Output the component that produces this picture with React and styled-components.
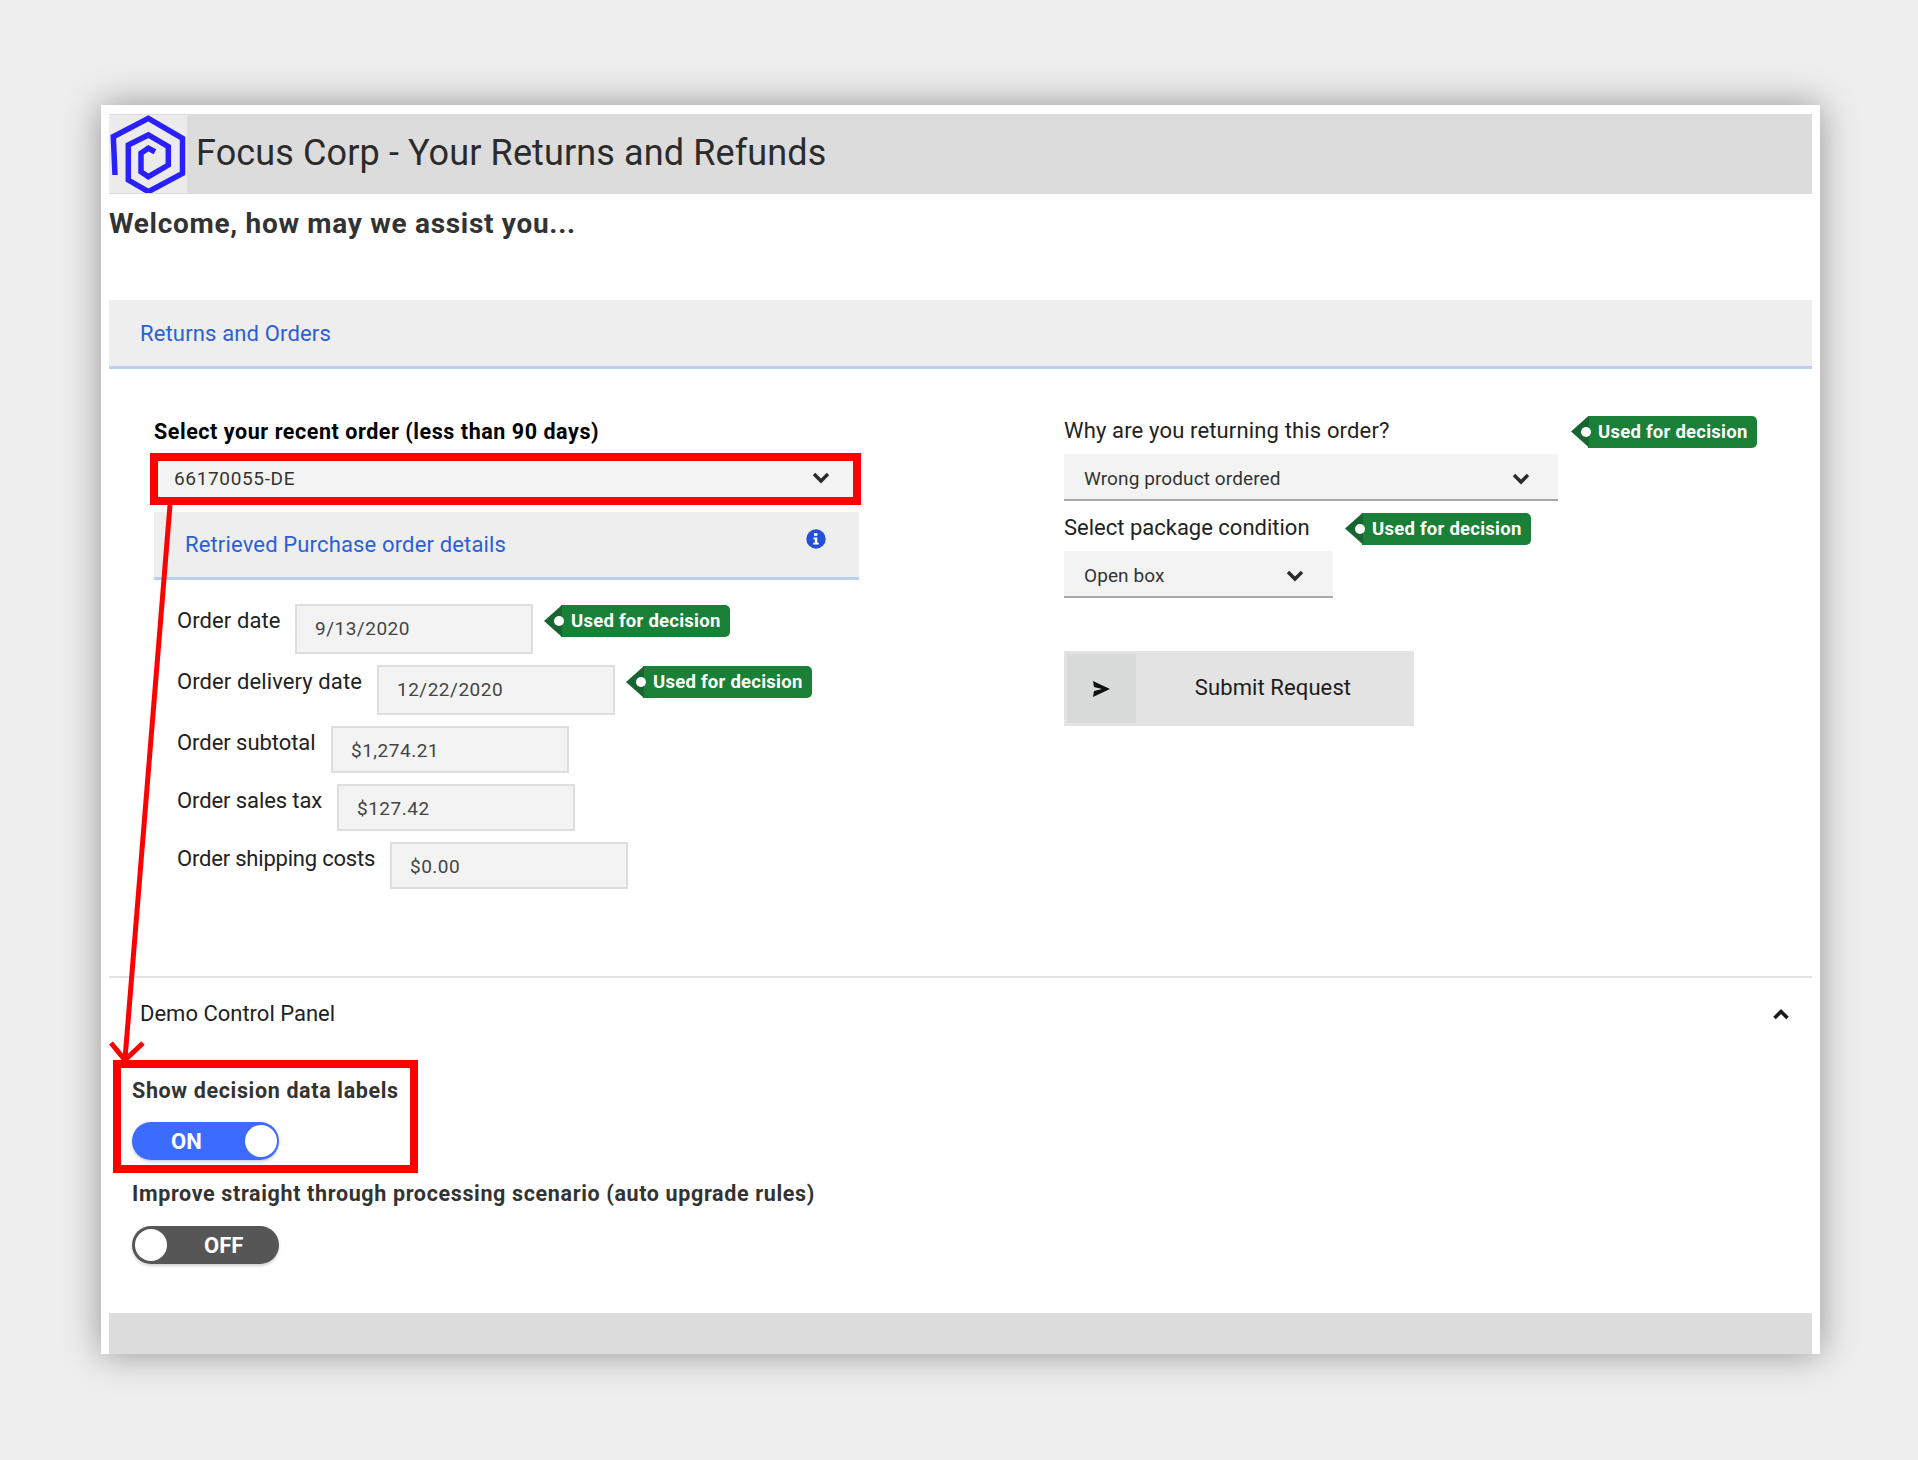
import React from "react";
import styled, { createGlobalStyle } from "styled-components";

const Global = createGlobalStyle`
  html, body { margin: 0; padding: 0; background: #eeeeee; }
  body { font-family: Roboto, "Noto Sans", "Liberation Sans", sans-serif; color: #222; }
  * { box-sizing: border-box; }
`;

const Page = styled.div`
  position: relative;
  height: 1460px;
  padding: 105px 98px 0 101px;
  background: #eeeeee;
  overflow: hidden;
`;
const Card = styled.main`
  background: #fff;
  padding: 9px 8px 0;
  box-shadow: 0 0 34px rgba(0, 0, 0, 0.38);
`;
const Header = styled.header`
  display: flex;
  align-items: center;
  height: 80px;
  background: #dcdcdc;
`;
const LogoBox = styled.div`
  width: 78px;
  height: 78px;
  background: #ebebeb;
  flex: none;
`;
const Title = styled.h1`
  margin: -2px 0 0 9px;
  font-size: 36px;
  font-weight: 400;
  color: #2b2b2b;
  letter-spacing: 0.12px;
`;
const Welcome = styled.h2`
  margin: 14px 0 60px;
  font-size: 28px;
  line-height: 32px;
  font-weight: 700;
  color: #333;
  letter-spacing: 0.7px;
`;
const PanelTab = styled.div`
  display: flex;
  justify-content: space-between;
  background: #eee;
  border-bottom: 3px solid #b9cff4;
  color: #2b5fd9;
  font-size: 22px;
  letter-spacing: 0.15px;
  height: ${(p) => p.$height}px;
  margin-top: ${(p) => p.$top || 0}px;
  padding: ${(p) => p.$pad};
`;
const InfoWrap = styled.span`
  display: block;
  margin-top: -3px;
  line-height: 0;
`;
const Columns = styled.div`
  display: flex;
  padding: 46px 0 0 45px;
`;
const LeftCol = styled.section`
  width: 705px;
  margin-right: 205px;
`;
const RightCol = styled.section`
  width: 694px;
`;
const BoldLabel = styled.div`
  font-size: 21.5px;
  line-height: 33px;
  margin-bottom: -1px;
  font-weight: 700;
  color: #000;
  letter-spacing: 0.55px;
`;
const FieldLabel = styled.div`
  display: flex;
  align-items: center;
  font-size: 22px;
  line-height: ${(p) => p.$lineHeight || 32}px;
  letter-spacing: ${(p) => p.$spacing ?? 0}px;
  width: ${(p) => p.$width}px;
  flex: none;
  color: #222;
`;
const LabelRow = styled.div`
  display: flex;
  align-items: center;
  height: 32px;
  margin-top: ${(p) => p.$top || 0}px;
`;
const Select = styled.div`
  display: flex;
  justify-content: space-between;
  align-items: center;
  width: ${(p) => p.$width}px;
  height: ${(p) => p.$height || 47}px;
  margin-top: ${(p) => p.$top}px;
  padding: ${(p) => p.$textTop ?? 4}px ${(p) => p.$right}px 0 20px;
  background: #f3f3f3;
  border-bottom: 2px solid ${(p) => p.$line || "#a8a8a8"};
  font-size: 19px;
  letter-spacing: ${(p) => p.$spacing || 0.1}px;
  color: #333;
`;
const Rows = styled.div`
  display: flex;
  flex-direction: column;
  gap: 11px;
  padding: 24px 0 0 23px;
`;
const Row = styled.div`
  display: flex;
  align-items: flex-start;
`;
const Input = styled.div`
  display: flex;
  align-items: center;
  width: 238px;
  height: ${(p) => p.$height}px;
  padding: ${(p) => (p.$height === 50 ? "0 0 2px 18px" : "2px 0 0 18px")};
  background: #f3f3f3;
  border: 2px solid #dedede;
  font-size: 19px;
  letter-spacing: 0.5px;
  color: #444;
  flex: none;
`;
const Badge = styled.span`
  position: relative;
  display: inline-flex;
  align-items: center;
  height: 32px;
  margin-left: ${(p) => p.$left || 0}px;
  margin-top: 1px;
  padding: 0 9px 0 27px;
  background: linear-gradient(90deg, transparent 17px, #1a8038 17px);
  border-radius: 0 5px 5px 0;
  color: #fff;
  font-size: 18.5px;
  letter-spacing: 0.25px;
  font-weight: 700;
  white-space: nowrap;
  flex: none;
  &::before {
    content: "";
    position: absolute;
    left: 0;
    top: 0;
    width: 18px;
    height: 32px;
    background: #176632;
    clip-path: polygon(100% 0, 0 50%, 100% 100%);
  }
  &::after {
    content: "";
    position: absolute;
    left: 10px;
    top: 11px;
    width: 10px;
    height: 10px;
    border-radius: 50%;
    background: #fff;
  }
`;
const SubmitButton = styled.div`
  display: flex;
  align-items: center;
  width: 350px;
  height: 75px;
  margin-top: 53px;
  padding: 3px;
  background: #e3e3e3;
  font-size: 22px;
  letter-spacing: 0.1px;
  color: #1c1c1c;
`;
const SubmitIcon = styled.span`
  display: flex;
  align-items: center;
  justify-content: center;
  width: 69px;
  height: 69px;
  padding-top: 1px;
  background: #d9dada;
  flex: none;
`;
const SubmitText = styled.span`
  flex: 1;
  padding: 0 1px 3px 0;
  text-align: center;
`;
const Divider = styled.hr`
  height: 2px;
  margin: 87px 0 0;
  border: 0;
  background: #e2e2e2;
`;
const Accordion = styled.div`
  display: flex;
  align-items: center;
  justify-content: space-between;
  height: 70px;
  padding: 0 23px 0 31px;
  font-size: 22px;
  color: #222;
`;
const ControlBlock = styled.div`
  padding: 26px 0 0 23px;
`;
const ControlLabel = styled.div`
  font-size: 21.5px;
  line-height: 33px;
  margin-bottom: -1px;
  font-weight: 700;
  letter-spacing: 0.64px;
  color: #333;
`;
const Toggle = styled.div`
  position: relative;
  display: flex;
  align-items: center;
  width: 147px;
  height: 38px;
  margin: ${(p) => (p.$on ? 16 : 17)}px 0 17px;
  border-radius: 19px;
  background: ${(p) => (p.$on ? "#3b6cff" : "#565656")};
  box-shadow: 0 2px 3px rgba(0, 0, 0, 0.18);
  color: #fff;
  font-size: 22px;
  font-weight: 700;
  padding-left: ${(p) => (p.$on ? 39 : 72)}px;
`;
const Knob = styled.span`
  position: absolute;
  top: 3px;
  ${(p) => (p.$on ? "right: 2px;" : "left: 3px;")}
  width: 32px;
  height: 32px;
  border-radius: 50%;
  background: #fff;
`;
const Footer = styled.footer`
  height: 41px;
  margin-top: 49px;
  background: #dcdcdc;
`;
const Highlight = styled.div`
  position: absolute;
  left: ${(p) => p.$x}px;
  top: ${(p) => p.$y}px;
  width: ${(p) => p.$w}px;
  height: ${(p) => p.$h}px;
  border: 8px solid #ff0000;
  pointer-events: none;
`;
const ArrowLayer = styled.svg`
  position: absolute;
  left: 0;
  top: 0;
  pointer-events: none;
`;

const Logo = () => (
  <svg width="78" height="78" viewBox="0 0 78 78" fill="none">
    <path
      d="M6 60 L4.3 21.7 L39.3 3.3 L73.5 23.3 L73.5 58.3 L39.3 76.7 L19.3 65 L19.3 30 L39.3 20 L59.3 31.7 L59.3 50 L39.3 61.7 L32 56.7 L32 38.3 L39.3 33.3 L46 36.7"
      stroke="#2a1fff"
      strokeWidth="5.5"
      strokeLinejoin="miter"
    />
  </svg>
);
const Chevron = () => (
  <svg width="18" height="12" viewBox="0 0 18 12" fill="none">
    <path d="M2 2 L9 9 L16 2" stroke="#2a2a2a" strokeWidth="3.4" />
  </svg>
);
const ChevronUp = () => (
  <svg width="16" height="12" viewBox="0 0 16 12" fill="none" style={{ marginTop: 2 }}>
    <path d="M1.5 10 L8 3.5 L14.5 10" stroke="#1a1a1a" strokeWidth="3.6" />
  </svg>
);
const InfoIcon = () => (
  <svg width="20" height="20" viewBox="0 0 20 20">
    <circle cx="10" cy="10" r="9.7" fill="#2450d8" />
    <rect x="8" y="4" width="3.4" height="2.8" fill="#fff" />
    <path d="M7.5 8.4 H11.3 V13.8 H12.8 V15.6 H7.2 V13.8 H8.8 V10.2 H7.5 Z" fill="#fff" />
  </svg>
);
const SendIcon = () => (
  <svg width="17" height="16" viewBox="0 0 17 16">
    <path d="M0 0 L17 8 L0 16 L1 10 L9 8 L1 6 Z" fill="#111" />
  </svg>
);

const rows = [
  { label: "Order date", w: 118, h: 50, value: "9/13/2020", badge: true, spacing: 0.1 },
  { label: "Order delivery date", w: 200, h: 50, value: "12/22/2020", badge: true, spacing: 0.1 },
  { label: "Order subtotal", w: 154, h: 47, value: "$1,274.21", spacing: -0.05 },
  { label: "Order sales tax", w: 160, h: 47, value: "$127.42", spacing: -0.1 },
  { label: "Order shipping costs", w: 213, h: 47, value: "$0.00", spacing: -0.2 },
];

export default function App() {
  return (
    <Page>
      <Global />
      <Card>
        <Header>
          <LogoBox><Logo /></LogoBox>
          <Title>Focus Corp - Your Returns and Refunds</Title>
        </Header>
        <Welcome>Welcome, how may we assist you...</Welcome>
        <PanelTab $height={69} $pad="21px 0 0 31px">Returns and Orders</PanelTab>
        <Columns>
          <LeftCol>
            <BoldLabel>Select your recent order (less than 90 days)</BoldLabel>
            <Select $width={705} $top={8} $right={29} $height={46} $line="#f3f3f3" $spacing={0.65} $textTop={2}>
              66170055-DE <Chevron />
            </Select>
            <PanelTab $height={68} $top={11} $pad="20px 33px 0 31px">
              Retrieved Purchase order details
              <InfoWrap><InfoIcon /></InfoWrap>
            </PanelTab>
            <Rows>
              {rows.map((r) => (
                <Row key={r.label}>
                  <FieldLabel $width={r.w} $lineHeight={34} $spacing={r.spacing}>{r.label}</FieldLabel>
                  <Input $height={r.h}>{r.value}</Input>
                  {r.badge && <Badge $left={11}>Used for decision</Badge>}
                </Row>
              ))}
            </Rows>
          </LeftCol>
          <RightCol>
            <LabelRow>
              <FieldLabel $width={507} $spacing={0.15}>Why are you returning this order?</FieldLabel>
              <Badge>Used for decision</Badge>
            </LabelRow>
            <Select $width={494} $top={7} $right={28}>Wrong product ordered <Chevron /></Select>
            <LabelRow $top={11}>
              <FieldLabel $width={281}>Select package condition</FieldLabel>
              <Badge>Used for decision</Badge>
            </LabelRow>
            <Select $width={269} $top={7} $right={29}>Open box <Chevron /></Select>
            <SubmitButton>
              <SubmitIcon><SendIcon /></SubmitIcon>
              <SubmitText>Submit Request</SubmitText>
            </SubmitButton>
          </RightCol>
        </Columns>
        <Divider />
        <Accordion>Demo Control Panel <ChevronUp /></Accordion>
        <ControlBlock>
          <ControlLabel>Show decision data labels</ControlLabel>
          <Toggle $on>ON<Knob $on /></Toggle>
          <ControlLabel>Improve straight through processing scenario (auto upgrade rules)</ControlLabel>
          <Toggle>OFF<Knob /></Toggle>
        </ControlBlock>
        <Footer />
      </Card>
      <Highlight $x={150} $y={453} $w={711} $h={52} />
      <Highlight $x={113} $y={1060} $w={305} $h={113} />
      <ArrowLayer width="1918" height="1460" viewBox="0 0 1918 1460" fill="none">
        <path d="M170 505 L125 1059" stroke="#ff0000" strokeWidth="5" />
        <path d="M111 1043 L125 1060 L143 1043" stroke="#ff0000" strokeWidth="5" />
      </ArrowLayer>
    </Page>
  );
}
